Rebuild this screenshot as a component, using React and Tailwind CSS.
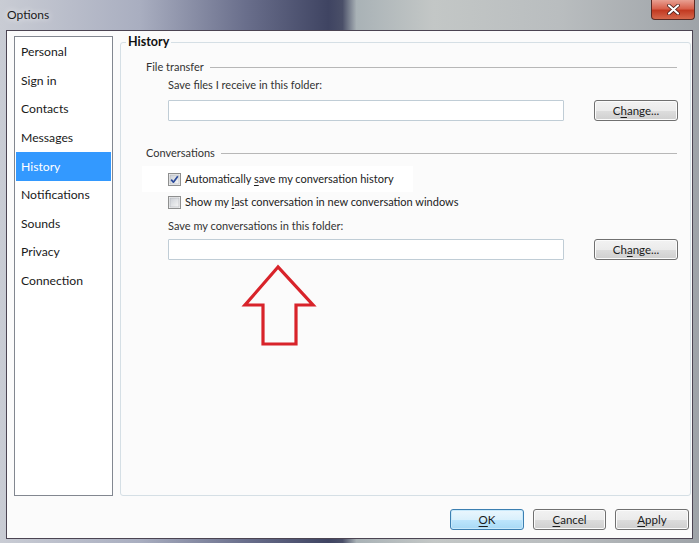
import React from "react";

const font = { fontFamily: 'Lato, "Noto Sans", sans-serif' };

function Mn({ children }) {
  return <span className="underline underline-offset-2 decoration-1">{children}</span>;
}

function WinButton({ children, primary }) {
  return (
    <button
      className={
        "w-full h-[21px] rounded-[3px] border text-[11.5px] leading-none text-[#1a1a1a] flex items-center justify-center " +
        (primary
          ? "border-[#3c7fb1] bg-[linear-gradient(#eaf6fd_0%,#d9f0fc_50%,#bee6fd_51%,#a7d9f5_100%)] shadow-[inset_0_0_0_1px_#c8e9fb]"
          : "border-[#707070] bg-[linear-gradient(#f2f2f2_0%,#ebebeb_50%,#dddddd_51%,#cfcfcf_100%)] shadow-[inset_0_0_0_1px_#fbfbfb]")
      }
    >
      {children}
    </button>
  );
}

function CheckBox({ checked }) {
  return (
    <svg width="13" height="13" viewBox="0 0 13 13" className="shrink-0">
      <defs>
        <linearGradient id={checked ? "cbA" : "cbB"} x1="0" y1="0" x2="1" y2="1">
          <stop offset="0" stopColor="#cbcfd5" />
          <stop offset="1" stopColor="#f6f6f6" />
        </linearGradient>
      </defs>
      <rect x="0.5" y="0.5" width="12" height="12" fill="#f4f4f4" stroke="#8e8f8f" />
      <rect x="2" y="2" width="9" height="9" fill={`url(#${checked ? "cbA" : "cbB"})`} stroke="#aeb3b9" strokeWidth="0.6" />
      {checked && (
        <path d="M3.2 6.6 L5.4 9.2 L9.8 3.2" fill="none" stroke="#2a4a9a" strokeWidth="1.7" strokeLinejoin="round" />
      )}
    </svg>
  );
}

function FolderInput() {
  return <div className="w-[396px] h-[21px] border border-[#c0cdd6] bg-white rounded-[1px] shrink-0" />;
}

function SectionHeading({ label }) {
  return (
    <div className="flex items-center gap-[6px] pr-[13px] h-[16px]">
      <span className="text-[11px] leading-[16px] text-[#333] whitespace-nowrap">{label}</span>
      <div className="flex-1 h-px bg-[#b7b7b7]" />
    </div>
  );
}

const nav = ["Personal", "Sign in", "Contacts", "Messages", "History", "Notifications", "Sounds", "Privacy", "Connection"];

export default function App() {
  return (
    <div
      className="relative w-[699px] h-[543px] overflow-hidden flex flex-col bg-[linear-gradient(90deg,#c9ccd4_0%,#a9aec0_20%,#6a6f8c_35%,#3f4462_47%,#4a4f68_49%,#a9b2b6_51%,#c3c7c6_62%,#b9bdbf_80%,#9ea3a8_100%)]"
      style={font}
    >
      {/* title bar */}
      <div className="h-[30px] flex items-start justify-between shrink-0">
        <span className="ml-[7px] mt-[7px] text-[12px] leading-[16px] text-[#1b1b1b] [text-shadow:0_0_6px_#ffffff]">Options</span>
        <div className="mr-[4px] w-[44px] h-[20px] rounded-b-[4px] border border-t-0 border-[#5a2a24] bg-[linear-gradient(#e8a092_0%,#d8614c_45%,#c23a22_55%,#d5684c_100%)] flex items-center justify-center">
          <svg width="13" height="11" viewBox="0 0 13 11">
            <path d="M2 1.5 L11 9.5 M11 1.5 L2 9.5" stroke="#3b1410" strokeWidth="3.6" strokeLinecap="round" />
            <path d="M2 1.5 L11 9.5 M11 1.5 L2 9.5" stroke="#ffffff" strokeWidth="2.2" strokeLinecap="round" />
          </svg>
        </div>
      </div>

      {/* client area */}
      <div className="flex-1 mx-[6px] mb-[6px] border border-[#4b4452] bg-[#fbfbfb] flex flex-col">
        <div className="flex-1 flex pl-[7px] pt-[5px] pr-[1px]">
          {/* category list */}
          <div className="w-[99px] h-[460px] border border-[#828790] bg-white pt-[1px] px-[1px] shrink-0">
            {nav.map((n) => (
              <div
                key={n}
                className={
                  "h-[28.6px] flex items-center pl-[5px] text-[12.2px] " +
                  (n === "History" ? "bg-[#3399ff] text-white" : "text-[#1a1a1a]")
                }
              >
                {n}
              </div>
            ))}
          </div>

          {/* history group */}
          <div className="ml-[7px] mt-[6px] flex-1 h-[454px] border border-[#d5dfe5] rounded-[3px] relative">
            <div className="absolute -top-[10px] left-[5px] px-[2px] bg-[#fbfbfb] text-[12.5px] leading-[18px] font-bold text-[#111]">History</div>
            <div className="pl-[25px] pt-[16px] flex flex-col">
              <SectionHeading label="File transfer" />
              <div className="pl-[22px] mt-[2px] text-[11px] leading-[16px] text-[#333]">Save files I receive in this folder:</div>
              <div className="pl-[22px] mt-[7px] flex items-center gap-[30px]">
                <FolderInput />
                <div className="w-[84px] shrink-0">
                  <WinButton>
                    <span>
                      C<Mn>h</Mn>ange...
                    </span>
                  </WinButton>
                </div>
              </div>

              <div className="mt-[24px]">
                <SectionHeading label="Conversations" />
              </div>
              <div className="mt-[5px] -ml-[4px] w-[271px] h-[26px] bg-white flex items-center pl-[26px] gap-[4px]">
                <CheckBox checked />
                <span className="text-[11px] leading-[16px] text-[#222] whitespace-nowrap">
                  Automatically <Mn>s</Mn>ave my conversation history
                </span>
              </div>
              <div className="-mt-[2px] pl-[22px] h-[24px] flex items-center gap-[4px]">
                <CheckBox />
                <span className="text-[11px] leading-[16px] text-[#222] whitespace-nowrap">
                  Show my <Mn>l</Mn>ast conversation in new conversation windows
                </span>
              </div>
              <div className="pl-[22px] mt-[4px] text-[11px] leading-[16px] text-[#333]">Save my conversations in this folder:</div>
              <div className="pl-[22px] mt-[5px] flex items-center gap-[30px]">
                <FolderInput />
                <div className="w-[84px] shrink-0">
                  <WinButton>
                    <span>
                      Ch<Mn>a</Mn>nge...
                    </span>
                  </WinButton>
                </div>
              </div>
            </div>
          </div>
        </div>

        {/* dialog buttons */}
        <div className="h-[42px] flex items-start justify-end gap-[9px] pr-[3px] pt-[13px]">
          <div className="w-[74px]">
            <WinButton primary>
              <span>
                <Mn>O</Mn>K
              </span>
            </WinButton>
          </div>
          <div className="w-[73px]">
            <WinButton>
              <span>
                <Mn>C</Mn>ancel
              </span>
            </WinButton>
          </div>
          <div className="w-[74px]">
            <WinButton>
              <span>
                <Mn>A</Mn>pply
              </span>
            </WinButton>
          </div>
        </div>
      </div>

      {/* red annotation arrow */}
      <svg className="absolute left-[240px] top-[262px]" width="80" height="88" viewBox="0 0 80 88">
        <path
          d="M38 5 L5 43 L23 43 L23 82 L56 82 L56 43 L73 43 Z"
          fill="none"
          stroke="#d8232a"
          strokeWidth="3.2"
          strokeLinejoin="miter"
        />
      </svg>
    </div>
  );
}
